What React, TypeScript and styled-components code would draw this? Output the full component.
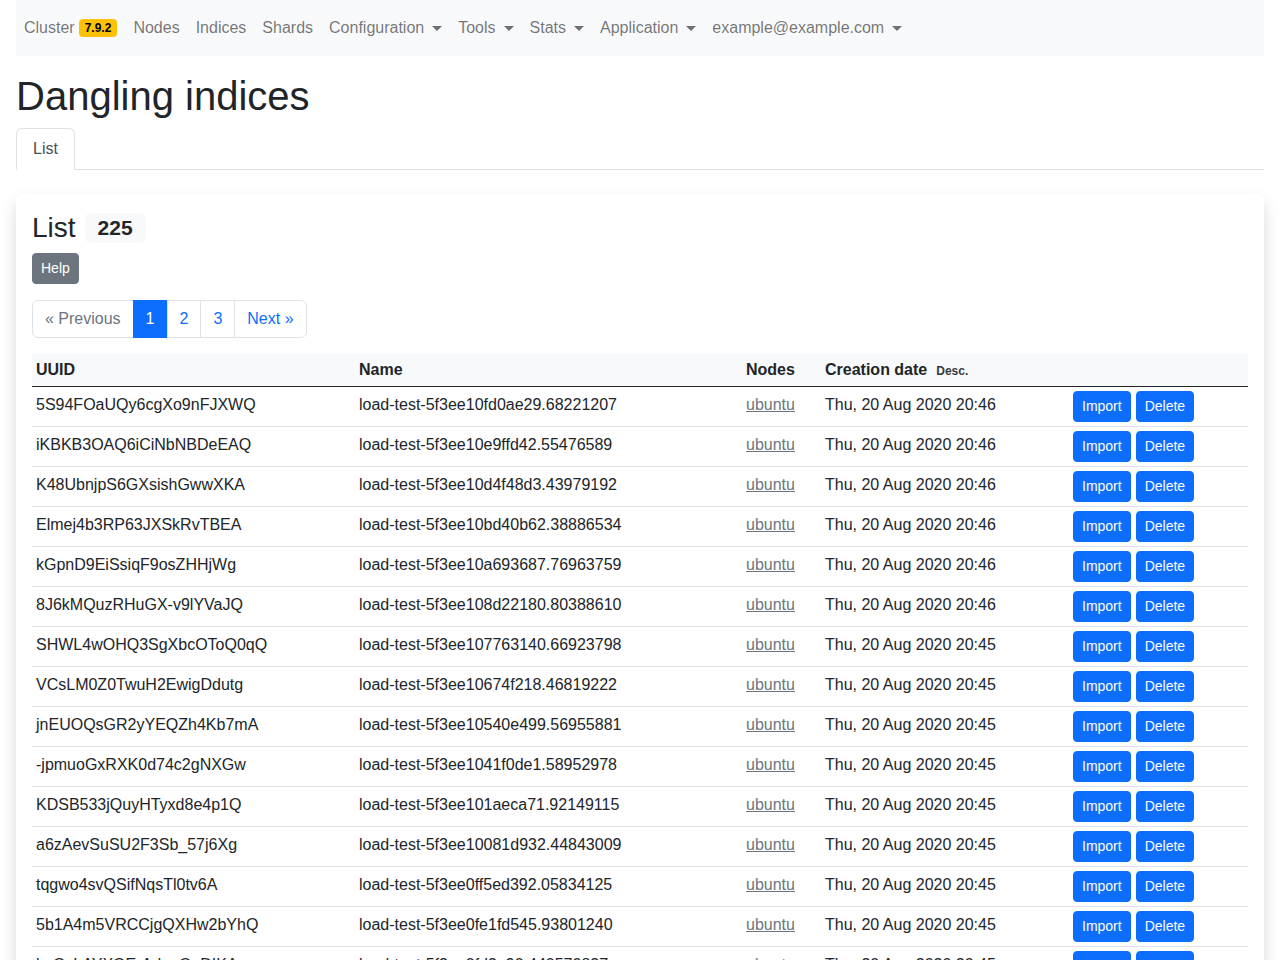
import React from "react";
import styled, { createGlobalStyle } from "styled-components";

const GlobalStyle = createGlobalStyle`
  html { overflow: hidden; }
  body {
    margin: 0;
    font-family: "Liberation Sans", Arial, sans-serif;
    font-size: 16px;
    line-height: 1.5;
    color: #212529;
    background: #fff;
  }
  * { box-sizing: border-box; }
`;

const Page = styled.div`
  padding: 0 16px;
`;

const Navbar = styled.nav`
  display: flex;
  align-items: center;
  height: 56px;
  padding: 8px 0;
  background: #f8f9fa;
`;

const NavLink = styled.a`
  display: flex;
  align-items: center;
  padding: 8px;
  color: rgba(0, 0, 0, 0.55);
  text-decoration: none;
  line-height: 24px;
`;

const Caret = styled.span`
  display: inline-block;
  margin-left: 8px;
  border-top: 5px solid rgba(0, 0, 0, 0.55);
  border-left: 5px solid transparent;
  border-right: 5px solid transparent;
`;

const VersionBadge = styled.span`
  margin-left: 4px;
  padding: 3px 6px;
  font-size: 12px;
  font-weight: 700;
  line-height: 12px;
  color: #000;
  background: #ffc107;
  border-radius: 4px;
`;

const Title = styled.h1`
  margin: 16px 0 8px;
  font-size: 40px;
  font-weight: 500;
  line-height: 48px;
`;

const Tabs = styled.div`
  display: flex;
  border-bottom: 1px solid #dee2e6;
`;

const Tab = styled.div<{ $active?: boolean }>`
  padding: 8px 16px;
  margin-bottom: -1px;
  color: #495057;
  background: #fff;
  border: 1px solid ${(p) => (p.$active ? "#dee2e6" : "transparent")};
  border-bottom-color: #fff;
  border-radius: 6px 6px 0 0;
`;

const Card = styled.section`
  margin-top: 24px;
  padding: 16px;
  background: #fff;
  border-radius: 6px;
  box-shadow: 0 8px 16px rgba(0, 0, 0, 0.15);
`;

const CardTitle = styled.h3`
  display: flex;
  align-items: center;
  margin: 1px 0 8px;
  font-size: 28px;
  font-weight: 500;
  line-height: 34px;
`;

const CountBadge = styled.span`
  margin-left: 9px;
  padding: 4px 13px;
  font-size: 21px;
  font-weight: 700;
  line-height: 22px;
  color: #212529;
  background: #f8f9fa;
  border-radius: 6px;
`;

const Button = styled.button<{ $variant: "primary" | "secondary" }>`
  padding: 4px 8px;
  font-family: inherit;
  font-size: 14px;
  line-height: 21px;
  color: #fff;
  background: ${(p) => (p.$variant === "primary" ? "#0d6efd" : "#6c757d")};
  border: 1px solid ${(p) => (p.$variant === "primary" ? "#0d6efd" : "#6c757d")};
  border-radius: 4px;
`;

const Pagination = styled.ul`
  display: flex;
  margin: 16px 0;
  padding: 0;
  list-style: none;
`;

const PageItem = styled.li<{ $active?: boolean; $disabled?: boolean }>`
  padding: 6px 12px;
  margin-left: -1px;
  line-height: 24px;
  color: ${(p) => (p.$active ? "#fff" : p.$disabled ? "#6c757d" : "#0d6efd")};
  background: ${(p) => (p.$active ? "#0d6efd" : "#fff")};
  border: 1px solid ${(p) => (p.$active ? "#0d6efd" : "#dee2e6")};
  &:first-child {
    margin-left: 0;
    border-radius: 6px 0 0 6px;
  }
  &:last-child {
    border-radius: 0 6px 6px 0;
  }
`;

const Table = styled.table`
  width: 100%;
  border-collapse: collapse;
  table-layout: fixed;
  vertical-align: top;
`;

const HeadRow = styled.tr`
  background: #f8f9fa;
  border-bottom: 1px solid #212529;
`;

const Th = styled.th`
  padding: 4px;
  text-align: left;
  font-weight: 700;
  line-height: 24px;
`;

const SortHint = styled.small`
  margin-left: 9px;
  font-size: 12px;
  font-weight: 700;
  line-height: 1;
  color: #343a40;
`;

const Row = styled.tr`
  border-bottom: 1px solid #dee2e6;
`;

const Td = styled.td`
  padding: 2px 4px 6px;
  line-height: 24px;
  white-space: nowrap;
  overflow: hidden;
`;

const NodeLink = styled.a`
  color: #6c757d;
  text-decoration: underline;
`;

const Actions = styled.div`
  display: flex;
  gap: 5px;
  margin: 2px 0 -2px;
`;

const indices: [string, string, string][] = [
  ["5S94FOaUQy6cgXo9nFJXWQ", "load-test-5f3ee10fd0ae29.68221207", "20:46"],
  ["iKBKB3OAQ6iCiNbNBDeEAQ", "load-test-5f3ee10e9ffd42.55476589", "20:46"],
  ["K48UbnjpS6GXsishGwwXKA", "load-test-5f3ee10d4f48d3.43979192", "20:46"],
  ["Elmej4b3RP63JXSkRvTBEA", "load-test-5f3ee10bd40b62.38886534", "20:46"],
  ["kGpnD9EiSsiqF9osZHHjWg", "load-test-5f3ee10a693687.76963759", "20:46"],
  ["8J6kMQuzRHuGX-v9lYVaJQ", "load-test-5f3ee108d22180.80388610", "20:46"],
  ["SHWL4wOHQ3SgXbcOToQ0qQ", "load-test-5f3ee107763140.66923798", "20:45"],
  ["VCsLM0Z0TwuH2EwigDdutg", "load-test-5f3ee10674f218.46819222", "20:45"],
  ["jnEUOQsGR2yYEQZh4Kb7mA", "load-test-5f3ee10540e499.56955881", "20:45"],
  ["-jpmuoGxRXK0d74c2gNXGw", "load-test-5f3ee1041f0de1.58952978", "20:45"],
  ["KDSB533jQuyHTyxd8e4p1Q", "load-test-5f3ee101aeca71.92149115", "20:45"],
  ["a6zAevSuSU2F3Sb_57j6Xg", "load-test-5f3ee10081d932.44843009", "20:45"],
  ["tqgwo4svQSifNqsTl0tv6A", "load-test-5f3ee0ff5ed392.05834125", "20:45"],
  ["5b1A4m5VRCCjgQXHw2bYhQ", "load-test-5f3ee0fe1fd545.93801240", "20:45"],
  ["bsQzLAYXQE-AdupQqDIKA", "load-test-5f3ee0fd3e90.440570837", "20:45"],
  ["Wq3nT8pLRaGk2vXcYbH1sA", "load-test-5f3ee0fc1a2b44.12093876", "20:45"],
];

const navItems: [string, boolean][] = [
  ["Nodes", false],
  ["Indices", false],
  ["Shards", false],
  ["Configuration", true],
  ["Tools", true],
  ["Stats", true],
  ["Application", true],
  ["example@example.com", true],
];

export default function App() {
  return (
    <>
      <GlobalStyle />
      <Page>
        <Navbar>
          <NavLink>
            Cluster <VersionBadge>7.9.2</VersionBadge>
          </NavLink>
          {navItems.map(([label, dropdown]) => (
            <NavLink key={label}>
              {label}
              {dropdown && <Caret />}
            </NavLink>
          ))}
        </Navbar>

        <Title>Dangling indices</Title>
        <Tabs>
          <Tab $active>List</Tab>
        </Tabs>

        <Card>
          <CardTitle>
            List <CountBadge>225</CountBadge>
          </CardTitle>
          <Button $variant="secondary">Help</Button>

          <Pagination>
            <PageItem $disabled>« Previous</PageItem>
            <PageItem $active>1</PageItem>
            <PageItem>2</PageItem>
            <PageItem>3</PageItem>
            <PageItem>Next »</PageItem>
          </Pagination>

          <Table>
            <colgroup>
              <col style={{ width: 323 }} />
              <col style={{ width: 387 }} />
              <col style={{ width: 79 }} />
              <col style={{ width: 248 }} />
              <col />
            </colgroup>
            <thead>
              <HeadRow>
                <Th>UUID</Th>
                <Th>Name</Th>
                <Th>Nodes</Th>
                <Th>
                  Creation date<SortHint>Desc.</SortHint>
                </Th>
                <Th />
              </HeadRow>
            </thead>
            <tbody>
              {indices.map(([uuid, name, time]) => (
                <Row key={uuid}>
                  <Td>{uuid}</Td>
                  <Td>{name}</Td>
                  <Td>
                    <NodeLink>ubuntu</NodeLink>
                  </Td>
                  <Td>Thu, 20 Aug 2020 {time}</Td>
                  <Td>
                    <Actions>
                      <Button $variant="primary">Import</Button>
                      <Button $variant="primary">Delete</Button>
                    </Actions>
                  </Td>
                </Row>
              ))}
            </tbody>
          </Table>
        </Card>
      </Page>
    </>
  );
}
